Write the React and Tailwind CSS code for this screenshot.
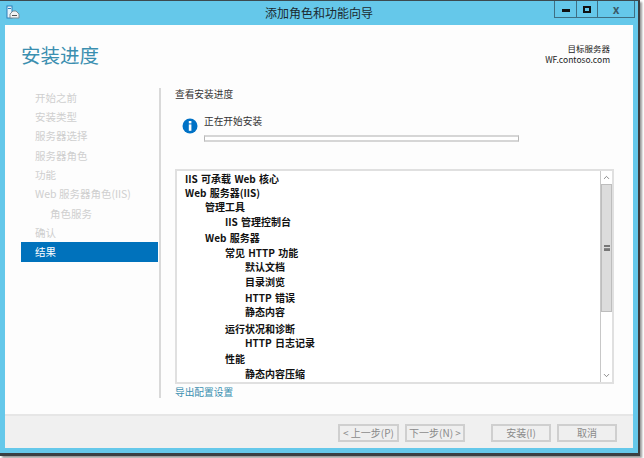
import React from 'react';
import { ChevronUp, ChevronDown } from 'lucide-react';

const font = { fontFamily: '"Noto Sans CJK SC", "Liberation Sans", sans-serif' };

const steps = [
  { label: '开始之前' },
  { label: '安装类型' },
  { label: '服务器选择' },
  { label: '服务器角色' },
  { label: '功能' },
  { label: 'Web 服务器角色(IIS)' },
  { label: '角色服务', sub: true },
  { label: '确认' },
  { label: '结果', active: true },
];

const rows = [
  { text: 'IIS 可承载 Web 核心', pad: 'pl-[8px]' },
  { text: 'Web 服务器(IIS)', pad: 'pl-[8px]' },
  { text: '管理工具', pad: 'pl-[28px]' },
  { text: 'IIS 管理控制台', pad: 'pl-[48px]' },
  { text: 'Web 服务器', pad: 'pl-[28px] mt-[2px]' },
  { text: '常见 HTTP 功能', pad: 'pl-[48px]' },
  { text: '默认文档', pad: 'pl-[68px]' },
  { text: '目录浏览', pad: 'pl-[68px] mt-[1px]' },
  { text: 'HTTP 错误', pad: 'pl-[68px] mt-[1px]' },
  { text: '静态内容', pad: 'pl-[68px]' },
  { text: '运行状况和诊断', pad: 'pl-[48px] mt-[2px]' },
  { text: 'HTTP 日志记录', pad: 'pl-[68px]' },
  { text: '性能', pad: 'pl-[48px] mt-[2px]' },
  { text: '静态内容压缩', pad: 'pl-[68px]' },
];

const WizardButton = ({ label, className }) => (
  <div className={`h-[18px] flex items-center justify-center whitespace-pre border-2 border-[#cfcfcf] bg-[#efefef] text-[10px] text-[#8a8a8a] ${className}`}>
    {label}
  </div>
);

const App = () => {
  return (
    <div className="w-[644px] h-[458px] bg-white overflow-hidden" style={font}>
      <div className="w-[640px] h-[456px] flex flex-col bg-[#65c8ea] border-t border-t-[#3c4a50] border-r-2 border-r-[#3a3f42] border-b-[3px] border-b-[#3a3f42] shadow-[2px_2px_2px_#999]">
        {/* Title bar */}
        <div className="h-[24px] shrink-0 flex items-start relative">
          <svg className="ml-[6px] mt-[4px]" width="14" height="15" viewBox="0 0 14 15">
            <rect x="1" y="1" width="5" height="12" fill="#e8f3fa" stroke="#2c7fb8" />
            <rect x="2" y="3" width="3" height="1" fill="#2c7fb8" />
            <path d="M4 9 L7 6 L10 6 L13 9 L13 13 L4 13 Z" fill="#f3f3f3" stroke="#7b8b94" />
            <rect x="6" y="10" width="5" height="1" fill="#555" />
          </svg>
          <div className="absolute left-0 right-0 top-[3px] text-center text-[12px] leading-[18px] text-[#1b2a30]">
            添加角色和功能向导
          </div>
          <div className="ml-auto mr-[3px] flex h-[17px] border border-t-0 border-[#3e6f83] relative">
            <div className="w-[22px] border-r border-[#3e6f83] flex items-center justify-center">
              <div className="w-[8px] h-[3px] bg-[#111] mt-[3px]" />
            </div>
            <div className="w-[21px] border-r border-[#3e6f83] flex items-center justify-center">
              <div className="w-[8px] h-[7px] border-2 border-[#111]" />
            </div>
            <div className="w-[36px] flex items-center justify-center text-[12px] font-bold leading-none text-[#3a5a68]">
              x
            </div>
          </div>
        </div>

        {/* Client area */}
        <div className="flex-1 mx-[5px] mb-[5px] flex flex-col bg-white min-h-0">
          <div className="flex-1 flex flex-col min-h-0 bg-[#fdfdfd]">
            <div className="h-[63px] shrink-0 flex justify-between pl-[16px] pr-[23px]">
              <div className="mt-[17px] text-[19.5px] leading-[26px] text-[#3b8fb0]">安装进度</div>
              <div className="mt-[18px] text-right text-[8.5px] leading-[11px] text-[#222]">
                <div>目标服务器</div>
                <div>WF.contoso.com</div>
              </div>
            </div>

            <div className="flex-1 flex min-h-0 pl-[16px]">
              {/* Steps */}
              <div className="w-[137px] h-[310px] shrink-0 mr-[1px]">
                {steps.map((step) => (
                  <div
                    key={step.label}
                    className={`h-[19.3px] flex items-center text-[10.5px] ${step.sub ? 'pl-[29px]' : 'pl-[14px]'} ${
                      step.active ? 'bg-[#0072bc] text-white' : 'text-[#cfcfcf]'
                    }`}
                  >
                    {step.label}
                  </div>
                ))}
              </div>
              <div className="w-[2px] h-[310px] shrink-0 bg-[#d9d9d9]" />

              {/* Main pane */}
              <div className="pl-[14px] w-[455px]">
                <div className="text-[9.7px] leading-[12px] text-[#333]">查看安装进度</div>
                <div className="flex mt-[14px] ml-[7px]">
                  <svg className="mt-[4px]" width="16" height="16" viewBox="0 0 16 16">
                    <circle cx="8" cy="8" r="7.5" fill="#0072c6" />
                    <rect x="6.8" y="3" width="2.6" height="2.4" fill="#fff" />
                    <rect x="6.8" y="6.4" width="2.6" height="6.4" fill="#fff" />
                  </svg>
                  <div className="ml-[6px]">
                    <div className="text-[9.7px] leading-[12px] text-[#333] mt-[1px]">正在开始安装</div>
                    <div className="w-[315px] h-[7px] mt-[8px] border border-[#b5b5b5] border-b-2 border-b-[#d6d6d6] border-t-2 border-t-[#d6d6d6] bg-white" />
                  </div>
                </div>

                {/* Feature list */}
                <div className="w-[439px] h-[215px] mt-[27px] flex border-2 border-[#e0e0e0] bg-white">
                  <div className="flex-1 overflow-hidden">
                    {rows.map((row) => (
                      <div key={row.text} className={`h-[14.4px] flex items-center text-[10px] font-semibold [word-spacing:1px] text-[#111] whitespace-pre ${row.pad}`}>
                        {row.text}
                      </div>
                    ))}
                  </div>
                  <div className="w-[12px] shrink-0 flex flex-col border-l border-[#c8c8c8]">
                    <div className="h-[13px] flex items-center justify-center">
                      <ChevronUp size={9} strokeWidth={2} color="#666" />
                    </div>
                    <div className="h-[128px] bg-[#dcdcdc] border border-[#bdbdbd] flex items-center justify-center">
                      <div className="w-[6px] h-[6px] border-y-2 border-[#777] flex items-center">
                        <div className="w-full h-[1px] bg-[#888]" />
                      </div>
                    </div>
                    <div className="flex-1" />
                    <div className="h-[13px] flex items-center justify-center">
                      <ChevronDown size={9} strokeWidth={2} color="#666" />
                    </div>
                  </div>
                </div>
                <div className="mt-[1px] text-[9.7px] leading-[14px] text-[#3b8fb0]">导出配置设置</div>
              </div>
            </div>
          </div>

          {/* Footer */}
          <div className="h-[34px] shrink-0 flex items-center pl-[333px] bg-[#f0f0f0] border-t-2 border-[#e6e6e6] pt-[1px]">
            <WizardButton label="< 上一步(P)" className="w-[61px]" />
            <WizardButton label="下一步(N) >" className="w-[60px] ml-[6px]" />
            <WizardButton label="安装(I)" className="w-[60px] ml-[26px]" />
            <WizardButton label="取消" className="w-[60px] ml-[6px]" />
          </div>
        </div>
      </div>
    </div>
  );
};

export default App;
